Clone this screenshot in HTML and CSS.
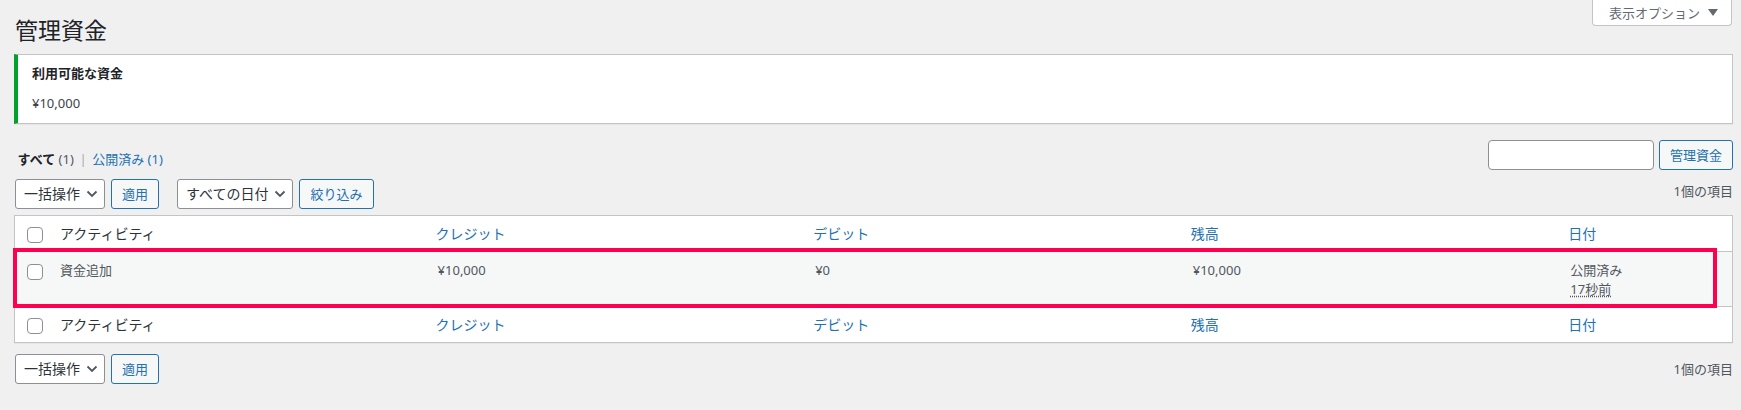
FILE: index.html
```html
<!DOCTYPE html>
<html lang="ja">
<head>
<meta charset="utf-8">
<title>管理資金</title>
<link rel="stylesheet" href="styles.css">
</head>
<body>
<div class="page">
  <div class="header">
    <h1 class="title">管理資金</h1>
    <button class="show-settings" type="button">表示オプション<svg class="tri" width="10" height="7" viewBox="0 0 10 7"><polygon points="0,0 10,0 5,7" fill="#646970"/></svg></button>
  </div>

  <div class="notice">
    <p><strong>利用可能な資金</strong></p>
    <p>¥10,000</p>
  </div>

  <div class="filters">
    <ul class="subsubsub">
      <li><a class="current" href="#">すべて <span class="count">(1)</span></a><span class="sep">|</span></li>
      <li><a href="#">公開済み <span class="count">(1)</span></a></li>
    </ul>
    <div class="search-box">
      <input class="search-input" type="search" aria-label="検索">
      <button class="button" type="button">管理資金</button>
    </div>
  </div>

  <div class="tablenav tablenav-top">
    <div class="actions">
      <div class="select">一括操作<svg class="chev" width="12" height="8" viewBox="0 0 12 8"><polyline points="1.5,1.5 6,6 10.5,1.5" fill="none" stroke="#50575e" stroke-width="1.8"/></svg></div>
      <button class="button" type="button">適用</button>
    </div>
    <div class="actions">
      <div class="select">すべての日付<svg class="chev" width="12" height="8" viewBox="0 0 12 8"><polyline points="1.5,1.5 6,6 10.5,1.5" fill="none" stroke="#50575e" stroke-width="1.8"/></svg></div>
      <button class="button" type="button">絞り込み</button>
    </div>
    <div class="displaying-num">1個の項目</div>
  </div>

  <div class="table-wrap">
    <table class="list-table">
      <thead>
        <tr>
          <td class="check-column"><input class="cb" type="checkbox"></td>
          <th class="col-activity">アクティビティ</th>
          <th class="sortable"><a href="#">クレジット</a></th>
          <th class="sortable"><a href="#">デビット</a></th>
          <th class="sortable"><a href="#">残高</a></th>
          <th class="sortable col-date"><a href="#">日付</a></th>
        </tr>
      </thead>
      <tbody>
        <tr class="alt">
          <th class="check-column body-check"><input class="cb" type="checkbox"></th>
          <td>資金追加</td>
          <td>¥10,000</td>
          <td>¥0</td>
          <td>¥10,000</td>
          <td>公開済み<br><abbr title="17秒前">17秒前</abbr></td>
        </tr>
      </tbody>
      <tfoot>
        <tr>
          <td class="check-column"><input class="cb" type="checkbox"></td>
          <th class="col-activity">アクティビティ</th>
          <th class="sortable"><a href="#">クレジット</a></th>
          <th class="sortable"><a href="#">デビット</a></th>
          <th class="sortable"><a href="#">残高</a></th>
          <th class="sortable col-date"><a href="#">日付</a></th>
        </tr>
      </tfoot>
    </table>
    <div class="highlight"></div>
  </div>

  <div class="tablenav tablenav-bottom">
    <div class="actions">
      <div class="select">一括操作<svg class="chev" width="12" height="8" viewBox="0 0 12 8"><polyline points="1.5,1.5 6,6 10.5,1.5" fill="none" stroke="#50575e" stroke-width="1.8"/></svg></div>
      <button class="button" type="button">適用</button>
    </div>
    <div class="displaying-num">1個の項目</div>
  </div>
</div>
</body>
</html>
```

FILE: styles.css
```css
* { box-sizing: border-box; }

html, body {
  margin: 0;
  padding: 0;
  background: #f0f0f1;
}

body {
  font-family: "Noto Sans", "Noto Sans CJK JP", sans-serif;
  font-size: 13px;
  line-height: 1.5;
  color: #3c434a;
}

.page {
  padding: 0 8px 0 14px;
  height: 410px;
}

/* header */
.header {
  display: flex;
  justify-content: space-between;
  align-items: flex-start;
}

.title {
  margin: 0;
  padding: 15px 0 0 1px;
  font-size: 23px;
  font-weight: 400;
  line-height: 30px;
  color: #1d2327;
}

.show-settings {
  display: flex;
  align-items: center;
  height: 26px;
  margin-right: 1px;
  padding: 0 13px 0 16px;
  background: #fff;
  border: 1px solid #c3c4c7;
  border-top: none;
  border-radius: 0 0 4px 4px;
  font-family: inherit;
  font-size: 13px;
  line-height: 20px;
  color: #646970;
}

.tri { margin-left: 8px; }

/* notice */
.notice {
  margin-top: 9px;
  background: #fff;
  border: 1px solid #c3c4c7;
  border-left: 4px solid #00a32a;
  box-shadow: 0 1px 1px rgba(0, 0, 0, .04);
  padding: 1px 12px 2px;
}

.notice p {
  margin: 6px 0;
  padding: 2px;
  line-height: 19.5px;
}

.notice strong {
  font-weight: 600;
  color: #1d2327;
}

/* filters */
.filters {
  display: flex;
  justify-content: space-between;
  align-items: flex-start;
  margin-top: 14px;
}

.subsubsub {
  list-style: none;
  display: flex;
  margin: 8px 0 0;
  padding: 0 0 0 1px;
  font-size: 13px;
  line-height: 26px;
  color: #646970;
}

.subsubsub a {
  padding: 0 .2em;
  color: #2271b1;
  text-decoration: none;
}

.subsubsub a.current {
  color: #1d2327;
  font-weight: 600;
}

.subsubsub .count {
  color: #50575e;
  font-weight: 400;
}

.subsubsub a:not(.current) .count {
  color: #2271b1;
}

.sep {
  margin: 0 3px;
  color: #a7aaad;
}

.search-box {
  display: flex;
  gap: 5px;
  margin-top: 2px;
}

.search-input {
  width: 166px;
  height: 30px;
  margin: 0;
  border: 1px solid #8c8f94;
  border-radius: 4px;
  background: #fff;
}

.button {
  height: 30px;
  margin: 0;
  padding: 0 10px;
  border: 1px solid #2271b1;
  border-radius: 3px;
  background: #f6f7f7;
  color: #2271b1;
  font-family: inherit;
  font-size: 13px;
  line-height: 28px;
  white-space: nowrap;
}

/* tablenav */
.tablenav {
  display: flex;
  align-items: flex-start;
  height: 30px;
  padding-left: 1px;
}

.tablenav-top { margin: 7px 0 6px; }
.tablenav-bottom { margin: 11px 0 0; }

.actions {
  display: flex;
  gap: 6px;
  margin-right: 18px;
}

.select {
  display: flex;
  align-items: center;
  height: 30px;
  padding: 0 6px 0 8px;
  border: 1px solid #8c8f94;
  border-radius: 3px;
  background: #fff;
  color: #2c3338;
  font-size: 14px;
  line-height: 28px;
  white-space: nowrap;
}

.chev { margin-left: 6px; }

.displaying-num {
  margin-left: auto;
  color: #50575e;
  font-size: 13px;
}

.tablenav-top .displaying-num { line-height: 25px; }
.tablenav-bottom .displaying-num { line-height: 30px; }

/* table */
.table-wrap {
  position: relative;
}

.list-table {
  width: 100%;
  table-layout: fixed;
  border-spacing: 0;
  background: #fff;
  border: 1px solid #c3c4c7;
  box-shadow: 0 1px 1px rgba(0, 0, 0, .04);
}

.list-table th,
.list-table td {
  text-align: left;
  vertical-align: top;
  font-weight: 400;
}

.list-table thead th,
.list-table thead td,
.list-table tfoot th,
.list-table tfoot td {
  padding: 8px 10px;
  font-size: 14px;
  line-height: 19px;
  color: #2c3338;
}

.list-table thead th,
.list-table thead td {
  border-bottom: 1px solid #c3c4c7;
}

.list-table tfoot th,
.list-table tfoot td {
  border-top: 1px solid #c3c4c7;
}

.list-table .check-column {
  width: 35px;
  padding: 11px 0 0 12px;
}

.list-table .body-check {
  padding: 12px 0 0 12px;
}

.list-table .sortable {
  padding: 0;
}

.list-table .sortable a {
  display: block;
  padding: 8px;
  color: #2271b1;
  text-decoration: none;
}

.list-table .col-date { width: 10%; }

.list-table tbody td {
  padding: 9px 10px 7px;
  font-size: 13px;
  line-height: 19px;
  color: #50575e;
}

.list-table tbody tr.alt td,
.list-table tbody tr.alt th {
  background: #f6f7f7;
}

abbr {
  text-decoration: underline dotted;
  text-underline-offset: 2px;
}

.cb {
  appearance: none;
  -webkit-appearance: none;
  display: block;
  width: 16px;
  height: 16px;
  margin: 0;
  border: 1px solid #8c8f94;
  border-radius: 4px;
  background: #fff;
}

/* highlight overlay */
.highlight {
  position: absolute;
  left: -1px;
  top: 33px;
  width: 1704px;
  height: 60px;
  border: 4px solid #ff0050;
  pointer-events: none;
}
```
